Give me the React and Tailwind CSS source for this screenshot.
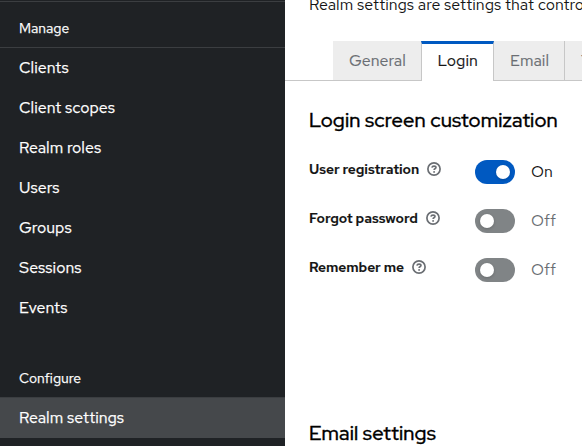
import React from "react";

const links = ["Clients", "Client scopes", "Realm roles", "Users", "Groups", "Sessions", "Events"];

const settings = [
  { label: "User registration", on: true },
  { label: "Forgot password", on: false },
  { label: "Remember me", on: false },
];

function HelpIcon() {
  return (
    <svg className="ml-2 size-[14px] shrink-0" viewBox="0 0 14 14" fill="none" stroke="#6a6e73">
      <circle cx="7" cy="7" r="6.1" strokeWidth="1.7" />
      <path d="M4.900 5.600C5.100 4.500 5.900 4.100 7 4.100c1.200 0 2 .6 2 1.500C9 6.900 7.100 6.700 7.100 8" strokeWidth="1.600" />
      <circle cx="7.100" cy="9.900" r=".95" fill="#6a6e73" stroke="none" />
    </svg>
  );
}

function Toggle({ on }) {
  return (
    <span
      className={
        "flex h-6 w-10 shrink-0 items-center rounded-full px-[5px] " +
        (on ? "justify-end bg-[#0059c1]" : "justify-start bg-[#808486]")
      }
    >
      <span className="size-[14px] rounded-full bg-white shadow-[0_1px_3px_rgba(0,0,0,0.2)]" />
    </span>
  );
}

function Sidebar() {
  return (
    <nav className="flex w-[285px] shrink-0 flex-col bg-[#1f2225] pt-px text-white [-webkit-text-stroke:0.25px]">
      <h2 className="h-[47px] border-y border-[#3b3e41] pl-[19px] pt-4 text-sm leading-[21px]">Manage</h2>
      {links.map((label) => (
        <a key={label} className="h-10 pl-[19px] pt-2 text-base leading-6">
          {label}
        </a>
      ))}
      <h2 className="mt-[38px] h-[32px] border-b border-[#3b3e41] pl-[19px] pt-0.5 text-sm leading-[21px]">
        Configure
      </h2>
      <a className="h-10 bg-[#45484b] pl-[19px] pt-2 text-base leading-6">Realm settings</a>
    </nav>
  );
}

function SectionTitle({ children }) {
  return (
    <h1 className="whitespace-nowrap font-['Red_Hat_Display','Red_Hat_Text','Inter',sans-serif] text-xl font-medium leading-[30px] tracking-[0.16px] text-black [-webkit-text-stroke:0.3px]">
      {children}
    </h1>
  );
}

export default function App() {
  return (
    <div className="flex h-[446px] w-[582px] overflow-hidden bg-white font-['Red_Hat_Text','Inter',sans-serif]">
      <Sidebar />
      <main className="min-w-0 flex-1 overflow-hidden">
        <div className="h-[41px] overflow-hidden pl-6">
          <p className="-mt-[7px] whitespace-nowrap text-base leading-6 text-[#151515]">
            Realm settings are settings that control
          </p>
        </div>
        <div className="flex h-10 text-base leading-6 [-webkit-text-stroke:0.15px]">
          <span className="w-12 shrink-0 border-b border-[#c7c7c7]" />
          <span className="w-[88px] shrink-0 border-b border-[#c7c7c7] bg-[#ededed] pl-4 pt-2 text-[#6a6e73]">
            General
          </span>
          <span className="w-[73px] shrink-0 border-x border-t-[3px] border-x-[#c7c7c7] border-t-[#0059c1] bg-white pl-[15.5px] pt-[5px] text-[#151515]">
            Login
          </span>
          <span className="w-[71px] shrink-0 border-b border-r border-[#c7c7c7] bg-[#ededed] pl-4 pt-2 text-[#6a6e73]">
            Email
          </span>
          <span className="flex-1 whitespace-nowrap border-b border-[#c7c7c7] bg-[#ededed] pl-4 pt-2 text-[#6a6e73]">
            Themes
          </span>
        </div>
        <section className="pl-6 pt-6">
          <SectionTitle>Login screen customization</SectionTitle>
          <div className="mt-[25px] flex flex-col gap-[25px]">
            {settings.map((s) => (
              <div key={s.label} className="flex h-6">
                <div className="-mt-[3px] flex h-6 w-[166px] shrink-0 items-center">
                  <span className="whitespace-nowrap text-sm font-semibold leading-6 tracking-[-0.11px] text-[#151515] [-webkit-text-stroke:0.15px]">
                    {s.label}
                  </span>
                  <HelpIcon />
                </div>
                <Toggle on={s.on} />
                <span className={"ml-4 text-base leading-6 " + (s.on ? "text-[#151515]" : "text-[#6a6e73]")}>
                  {s.on ? "On" : "Off"}
                </span>
              </div>
            ))}
          </div>
          <div className="mt-[136px]">
            <SectionTitle>Email settings</SectionTitle>
          </div>
        </section>
      </main>
    </div>
  );
}
